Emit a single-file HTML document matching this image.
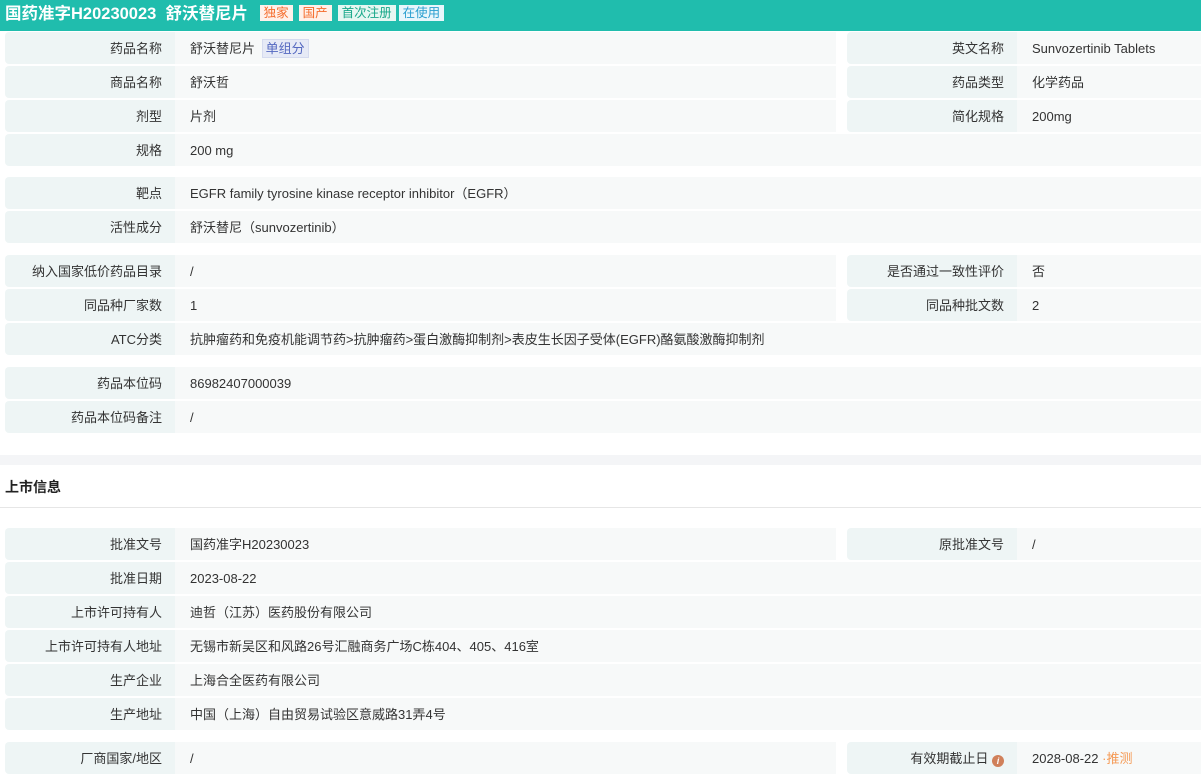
<!DOCTYPE html>
<html><head><meta charset="utf-8"><style>
*{margin:0;padding:0;box-sizing:border-box}
body{width:1201px;height:775px;overflow:hidden;background:#fff;font-family:"Liberation Sans","Noto Sans CJK SC",sans-serif;font-size:13px;color:#333;position:relative}
.hd{position:absolute;left:0;top:0;width:1201px;height:31px;background:#20bdad;color:#fff;font-weight:bold;font-size:16.5px;line-height:29px;padding-left:5px;white-space:nowrap}
.tg{display:inline-block;font-size:12.5px;font-weight:normal;line-height:16px;padding:0 4px;margin-left:3px;vertical-align:2px}
.r{position:absolute;height:32px;line-height:34px}
.l{position:absolute;background:#eef5f5;text-align:right;padding-right:13px;height:32px;border-radius:4px 0 0 4px}
.v{position:absolute;background:#f7f9f9;padding-left:15px;height:32px}
.band{position:absolute;left:0;top:455px;width:1201px;height:10px;background:#f4f5f7}
.sec{position:absolute;left:5px;top:477px;font-weight:bold;font-size:14px;color:#222}
.ln{position:absolute;left:0;top:507px;width:1201px;height:1px;background:#e6e6e6}
</style></head><body>
<div class="hd">国药准字H20230023&nbsp; 舒沃替尼片 <span class="tg" style="background:#fff1ea;color:#f56c2c;margin-left:7px">独家</span><span class="tg" style="background:#fff1ea;color:#f56c2c;margin-left:6px">国产</span><span class="tg" style="background:#e6f7f2;color:#18a88a;margin-left:6px">首次注册</span><span class="tg" style="background:#e8f6fb;color:#2a9fd0">在使用</span></div>

<div class="band"></div>
<div class="sec">上市信息</div>
<div class="ln"></div>

<div class="r" style="top:32px"><div class="l" style="left:5px;width:170px">药品名称</div><div class="v" style="left:175px;width:661px">舒沃替尼片 <span style="background:#e6eaf6;color:#5468c0;border:1px solid #d5dbef;padding:0 3px;line-height:17px;display:inline-block;font-size:13px;margin-left:3px">单组分</span></div><div class="l" style="left:847px;width:170px">英文名称</div><div class="v" style="left:1017px;width:184px">Sunvozertinib Tablets</div></div>
<div class="r" style="top:66px"><div class="l" style="left:5px;width:170px">商品名称</div><div class="v" style="left:175px;width:661px">舒沃哲</div><div class="l" style="left:847px;width:170px">药品类型</div><div class="v" style="left:1017px;width:184px">化学药品</div></div>
<div class="r" style="top:100px"><div class="l" style="left:5px;width:170px">剂型</div><div class="v" style="left:175px;width:661px">片剂</div><div class="l" style="left:847px;width:170px">简化规格</div><div class="v" style="left:1017px;width:184px">200mg</div></div>
<div class="r" style="top:134px"><div class="l" style="left:5px;width:170px">规格</div><div class="v" style="left:175px;width:1026px">200 mg</div></div>

<div class="r" style="top:177px"><div class="l" style="left:5px;width:170px">靶点</div><div class="v" style="left:175px;width:1026px">EGFR family tyrosine kinase receptor inhibitor（EGFR）</div></div>
<div class="r" style="top:211px"><div class="l" style="left:5px;width:170px">活性成分</div><div class="v" style="left:175px;width:1026px">舒沃替尼（sunvozertinib）</div></div>

<div class="r" style="top:255px"><div class="l" style="left:5px;width:170px">纳入国家低价药品目录</div><div class="v" style="left:175px;width:661px">/</div><div class="l" style="left:847px;width:170px">是否通过一致性评价</div><div class="v" style="left:1017px;width:184px">否</div></div>
<div class="r" style="top:289px"><div class="l" style="left:5px;width:170px">同品种厂家数</div><div class="v" style="left:175px;width:661px">1</div><div class="l" style="left:847px;width:170px">同品种批文数</div><div class="v" style="left:1017px;width:184px">2</div></div>
<div class="r" style="top:323px"><div class="l" style="left:5px;width:170px">ATC分类</div><div class="v" style="left:175px;width:1026px">抗肿瘤药和免疫机能调节药&gt;抗肿瘤药&gt;蛋白激酶抑制剂&gt;表皮生长因子受体(EGFR)酪氨酸激酶抑制剂</div></div>

<div class="r" style="top:367px"><div class="l" style="left:5px;width:170px">药品本位码</div><div class="v" style="left:175px;width:1026px">86982407000039</div></div>
<div class="r" style="top:401px"><div class="l" style="left:5px;width:170px">药品本位码备注</div><div class="v" style="left:175px;width:1026px">/</div></div>

<div class="r" style="top:528px"><div class="l" style="left:5px;width:170px">批准文号</div><div class="v" style="left:175px;width:661px">国药准字H20230023</div><div class="l" style="left:847px;width:170px">原批准文号</div><div class="v" style="left:1017px;width:184px">/</div></div>
<div class="r" style="top:562px"><div class="l" style="left:5px;width:170px">批准日期</div><div class="v" style="left:175px;width:1026px">2023-08-22</div></div>
<div class="r" style="top:596px"><div class="l" style="left:5px;width:170px">上市许可持有人</div><div class="v" style="left:175px;width:1026px">迪哲（江苏）医药股份有限公司</div></div>
<div class="r" style="top:630px"><div class="l" style="left:5px;width:170px">上市许可持有人地址</div><div class="v" style="left:175px;width:1026px">无锡市新吴区和风路26号汇融商务广场C栋404、405、416室</div></div>
<div class="r" style="top:664px"><div class="l" style="left:5px;width:170px">生产企业</div><div class="v" style="left:175px;width:1026px">上海合全医药有限公司</div></div>
<div class="r" style="top:698px"><div class="l" style="left:5px;width:170px">生产地址</div><div class="v" style="left:175px;width:1026px">中国（上海）自由贸易试验区意威路31弄4号</div></div>

<div class="r" style="top:742px"><div class="l" style="left:5px;width:170px">厂商国家/地区</div><div class="v" style="left:175px;width:661px">/</div><div class="l" style="left:847px;width:170px">有效期截止日 <span style="display:inline-block;width:12px;height:12px;border-radius:50%;background:#d0805a;color:#fff;font-size:9px;line-height:12px;text-align:center;font-style:italic;font-weight:bold;vertical-align:-1px">i</span></div><div class="v" style="left:1017px;width:184px">2028-08-22 <span style="color:#f59a55">·推测</span></div></div>
</body></html>
